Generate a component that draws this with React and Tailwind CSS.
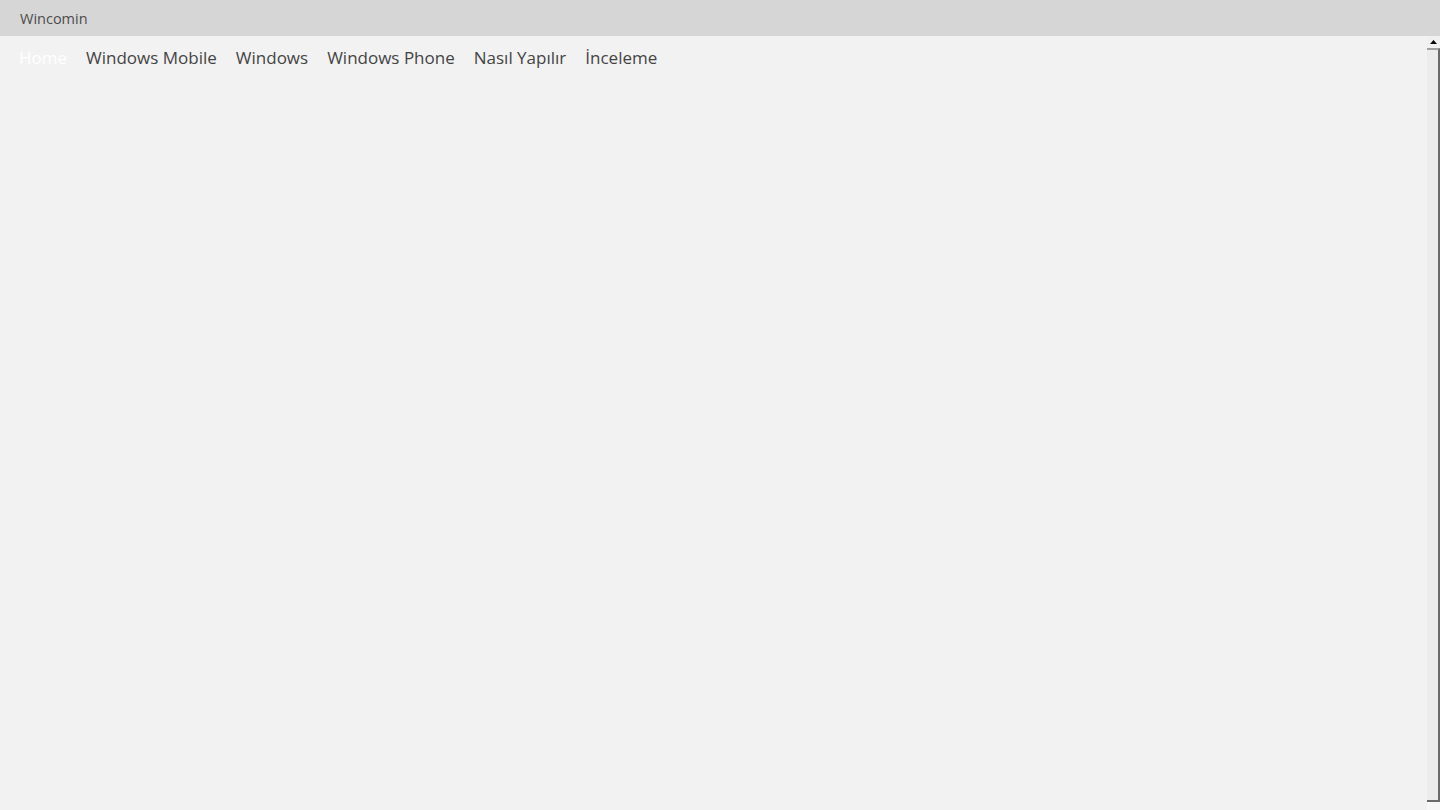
const links = ["Windows Mobile", "Windows", "Windows Phone", "Nasıl Yapılır", "İnceleme"];

export default function App() {
  return (
    <div className="flex h-[810px] w-[1440px] flex-col overflow-hidden bg-[#f2f2f2] font-['Open_Sans',sans-serif]">
      <header className="flex h-9 shrink-0 items-center bg-[#d6d6d6] px-5 pt-px text-[14.5px] text-[#4c4c4c]">
        Wincomin
      </header>
      <div className="flex min-h-0 flex-1">
        <nav className="flex flex-1 items-start gap-[19px] px-[19px] pt-[9px] text-[17px] text-[#444]">
          <a className="text-white">Home</a>
          {links.map((l) => (
            <a key={l}>{l}</a>
          ))}
        </nav>
        {/* scrollbar */}
        <div className="flex w-[13px] flex-col">
          <div className="flex h-[12px] items-center justify-center bg-[#f0f0f0]">
            <svg width="7" height="4" viewBox="0 0 7 4">
              <path d="M0 4 L3.5 0 L7 4 Z" fill="#000" />
            </svg>
          </div>
          <div className="flex-1 border-t-2 border-r-2 border-b-2 border-t-[#a0a0a0] border-r-[#6a6a6a] border-b-[#6a6a6a] bg-[#ececec]" />
          <div className="h-[8px] bg-[#f7f7f7]" />
        </div>
      </div>
    </div>
  );
}
